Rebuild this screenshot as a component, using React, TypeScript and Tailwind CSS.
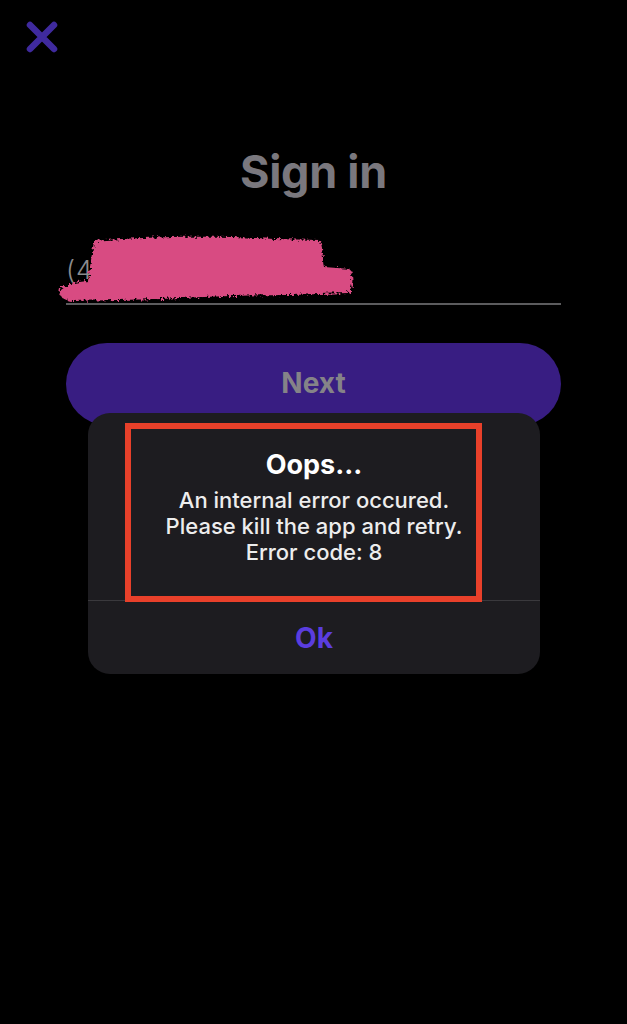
import { useState } from "react";

const CloseIcon = () => (
  <svg width="34" height="34" viewBox="0 0 34 34" fill="none">
    <path
      d="M5 5 L29 29 M29 5 L5 29"
      stroke="#3f2a9e"
      strokeWidth="6.5"
      strokeLinecap="round"
    />
  </svg>
);

// scribble that hides the phone number
const Scribble = () => (
  <svg
    className="absolute left-[52px] top-[231px] pointer-events-none"
    width="310"
    height="80"
    viewBox="0 0 310 80"
  >
    <defs>
      <filter id="rough" x="-5%" y="-10%" width="110%" height="120%">
        <feTurbulence type="fractalNoise" baseFrequency="0.35" numOctaves="2" seed="3" />
        <feDisplacementMap in="SourceGraphic" scale="7" />
      </filter>
    </defs>
    <path
      d="M42 10 C90 6 160 4 222 8 L268 9 C272 20 270 30 272 36 L298 38 C302 46 301 56 296 62 L240 64 C200 64 150 66 110 68 L20 70 C10 69 6 64 8 58 C14 53 24 51 36 50 C38 36 40 22 42 10 Z"
      fill="#d84c82"
      filter="url(#rough)"
    />
  </svg>
);

const ErrorDialog = ({ onOk }: { onOk: () => void }) => (
  <div className="absolute left-[88px] top-[413px] w-[452px] h-[261px] rounded-[22px] bg-[#1d1c20] flex flex-col">
    <div className="relative h-[188px] flex flex-col items-center pt-[35px] border-b border-[#3a393d]">
      <div className="text-[27px] leading-[34px] font-bold text-white">Oops...</div>
      <div className="mt-[5px] text-[22px] leading-[26px] font-medium text-[#ededed] text-center">
        <div>An internal error occured.</div>
        <div>Please kill the app and retry.</div>
        <div>Error code: 8</div>
      </div>
      {/* annotation box */}
      <div className="absolute left-[37px] top-[10px] w-[357px] h-[179px] border-[6px] border-[#e8402a]" />
    </div>
    <button
      onClick={onOk}
      className="flex-1 flex items-center justify-center text-[28px] font-bold text-[#5a3ddf]"
    >
      Ok
    </button>
  </div>
);

export default function App() {
  const [open, setOpen] = useState(true);

  return (
    <div
      className="relative w-full h-[1024px] bg-black overflow-hidden"
      style={{ fontFamily: "Inter, 'Noto Sans', sans-serif" }}
    >
      <div className="pl-[25px] pt-[20px]">
        <CloseIcon />
      </div>

      <h1 className="mt-[92px] text-center text-[45px] leading-[52px] font-bold text-[#7a787e] tracking-[-0.3px]">
        Sign in
      </h1>

      <div className="mx-[66px] mt-[57px] border-b-2 border-[#5c5c5e] h-[50px] flex items-start">
        <span className="text-[26px] leading-[30px] font-light text-[#8c8c8e] tracking-[1px]">
          (41
        </span>
      </div>
      <Scribble />

      <button className="mx-[66px] mt-[38px] w-[495px] h-[82px] rounded-full bg-[#381d82] flex items-center justify-center">
        <span className="text-[28px] font-bold text-[#858388] -mt-[2px]">Next</span>
      </button>

      {open && <ErrorDialog onOk={() => setOpen(false)} />}
    </div>
  );
}
